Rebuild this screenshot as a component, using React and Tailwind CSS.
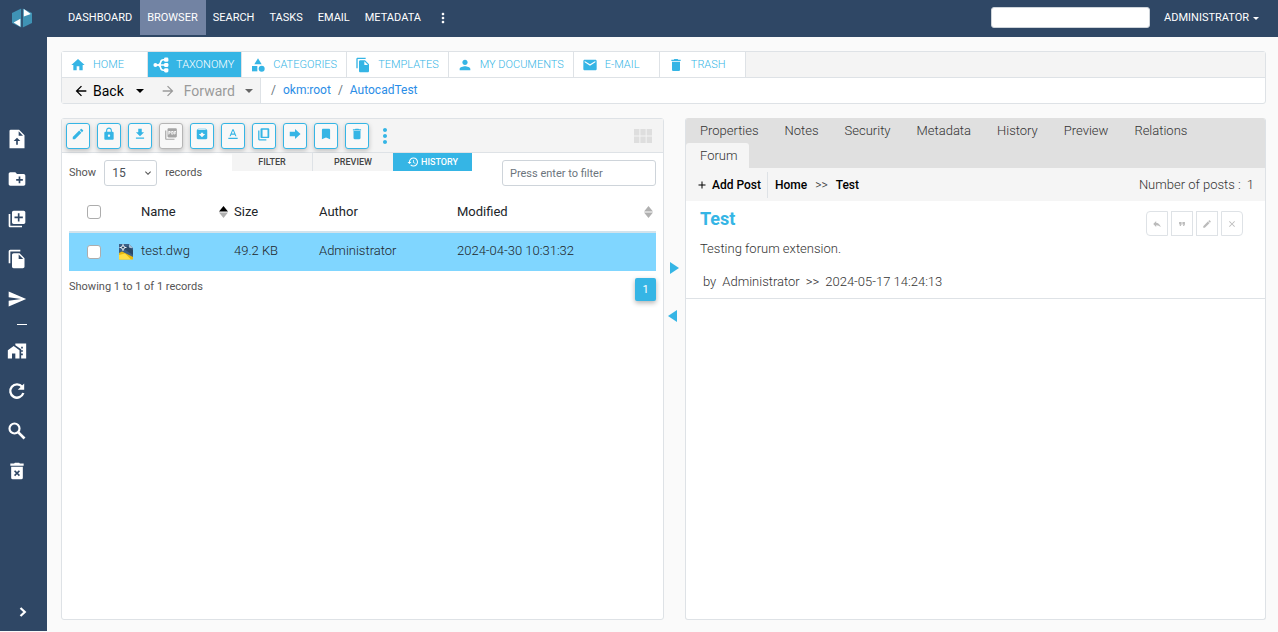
import React from "react";
import {
  MdHome, MdCategory, MdFileCopy, MdPerson, MdEmail, MdDelete, MdEdit, MdLock, MdFileDownload,
  MdPictureAsPdf, MdArchive, MdBookmark, MdHistory, MdViewModule, MdReply, MdFormatQuote, MdClose,
  MdAdd, MdArrowBack, MdArrowForward, MdMoreVert, MdSend, MdHomeWork,
  MdCreateNewFolder, MdLibraryAdd, MdExpandMore,
} from "react-icons/md";

function Logo() {
  return (
    <svg viewBox="0 0 20 20" className="size-5" aria-hidden="true">
      <path d="M9.2 0.4 L0 5 V15 L9.2 19.6 Z" fill="#3f93b5" />
      <path d="M10.8 0.4 L20 5 V15 L10.8 19.6 Z" fill="#3f93b5" />
      <path d="M11.8 1 L18.8 6 L11.8 8.6 Z" fill="#fff" />
      <path d="M8.4 10.8 V18.8 L1.6 14.4 Z" fill="#fff" />
    </svg>
  );
}

function TreeIcon({ className }) {
  return (
    <svg viewBox="0 0 16 16" className={className} fill="none" stroke="currentColor" strokeWidth="1.6" aria-hidden="true">
      <path d="M3 8H12M12 2.8H10.5Q8 2.8 7.6 5.4Q7.2 8 4 8Q7.2 8 7.6 10.6Q8 13.2 10.5 13.2H12" />
      <g fill="currentColor" stroke="none">
        <circle cx="2.4" cy="8" r="2" />
        <rect x="11" y="0.6" width="4.4" height="4.2" rx="1.4" />
        <rect x="11" y="5.9" width="4.4" height="4.2" rx="1.4" />
        <rect x="11" y="11.2" width="4.4" height="4.2" rx="1.4" />
      </g>
    </svg>
  );
}

function UploadIcon({ className }) {
  return (
    <svg viewBox="0 0 24 24" className={className} fill="currentColor" aria-hidden="true">
      <path fillRule="evenodd" d="M4.5 1H14.5L21 7.5V23H3V2.5A1.5 1.5 0 0 1 4.5 1ZM14 2.8V8H19.2ZM12 10.5L8 14.5H11V19H13V14.5H16Z" />
    </svg>
  );
}

function RefreshIcon({ className }) {
  return (
    <svg viewBox="0 0 24 24" className={className} fill="none" stroke="currentColor" strokeWidth="2.8" aria-hidden="true">
      <path d="M18.2 7A8 8 0 1 0 19.6 14.4" />
      <path d="M20.6 3V10.6H13Z" fill="currentColor" stroke="none" />
    </svg>
  );
}

function SearchIcon({ className }) {
  return (
    <svg viewBox="0 0 24 24" className={className} fill="none" stroke="currentColor" strokeWidth="2.6" aria-hidden="true">
      <circle cx="9" cy="9" r="6" />
      <path d="M13.6 13.6L21 21" strokeWidth="3.2" />
    </svg>
  );
}

function ChevronIcon({ className }) {
  return (
    <svg viewBox="0 0 10 10" className={className} fill="none" stroke="currentColor" strokeWidth="2.2" aria-hidden="true">
      <path d="M2.5 1L6.8 5L2.5 9" />
    </svg>
  );
}

function PurgeIcon({ className }) {
  return (
    <svg viewBox="0 0 24 24" className={className} fill="currentColor" aria-hidden="true">
      <path
        fillRule="evenodd"
        d="M5 7H19V20A2 2 0 0 1 17 22H7A2 2 0 0 1 5 20ZM9.8 11L8.4 12.4L10.6 14.6L8.4 16.8L9.8 18.2L12 16L14.2 18.2L15.6 16.8L13.4 14.6L15.6 12.4L14.2 11L12 13.2ZM4 3H8.5L9.5 2H14.5L15.5 3H20V5.6H4Z"
      />
    </svg>
  );
}

function RenameIcon({ className }) {
  return (
    <svg viewBox="0 0 24 24" className={className} fill="currentColor" aria-hidden="true">
      <path d="M4 18.5H20V20.5H4ZM11 4H13L18 16H16L14.9 13.2H9.1L8 16H6ZM9.9 11.2H14.1L12 5.9Z" />
    </svg>
  );
}

function CopyIcon({ className }) {
  return (
    <svg viewBox="0 0 24 24" className={className} fill="currentColor" aria-hidden="true">
      <path fillRule="evenodd" d="M8 2H19A2 2 0 0 1 21 4V17A2 2 0 0 1 19 19H8A2 2 0 0 1 6 17V4A2 2 0 0 1 8 2ZM9.5 4.5V16.5H18V4.5ZM2 6H4.2V20.8H16V23H4A2 2 0 0 1 2 21Z" />
    </svg>
  );
}

function MoveIcon({ className }) {
  return (
    <svg viewBox="0 0 24 24" className={className} fill="currentColor" aria-hidden="true">
      <path d="M3 8H12V3.5L21.5 12L12 20.5V16H3Z" />
    </svg>
  );
}

function DwgIcon() {
  return (
    <svg viewBox="0 0 16 16" className="size-4" aria-hidden="true">
      <path d="M1 0H11L15 4V15H1Z" fill="#3c5f86" />
      <path d="M11 0V4H15Z" fill="#a9bfd4" />
      <path d="M6 5L15 11V6L9 2Z" fill="#2b4765" />
      <path d="M1 9L4 7.4L15 13V15.6H1Z" fill="#e9b90f" />
      <path d="M1 11L7 9.4L13 15.6H1Z" fill="#ffdf45" />
      <path d="M5 0V7M1.5 3.5H8.5" stroke="#e8eef4" strokeWidth="1" />
      <circle cx="5" cy="3.5" r="1.6" fill="#2b4765" stroke="#fff" strokeWidth="0.9" />
    </svg>
  );
}

function Caret({ className }) {
  return (
    <svg viewBox="0 0 8 4" className={className} fill="currentColor" aria-hidden="true">
      <path d="M0 0H8L4 4Z" />
    </svg>
  );
}

function SortIcon({ up }) {
  return (
    <svg viewBox="0 0 8 12" className="h-3 w-[9px]" preserveAspectRatio="none" aria-hidden="true">
      <path d="M4 0L8 5.4H0Z" fill={up} />
      <path d="M0 6.6H8L4 12Z" fill="#b0b0b0" />
    </svg>
  );
}

const menu = ["DASHBOARD", "BROWSER", "SEARCH", "TASKS", "EMAIL", "METADATA"];

const sideTools = [
  ["Upload document", UploadIcon],
  ["New folder", MdCreateNewFolder],
  ["New from template", MdLibraryAdd],
  ["Copy", MdFileCopy],
  ["Send", MdSend],
];
const sideTools2 = [
  ["Set as home", MdHomeWork],
  ["Refresh", RefreshIcon],
  ["Find", SearchIcon],
  ["Purge", PurgeIcon],
];

const places = [
  ["HOME", MdHome],
  ["TAXONOMY", TreeIcon],
  ["CATEGORIES", MdCategory],
  ["TEMPLATES", MdFileCopy],
  ["MY DOCUMENTS", MdPerson],
  ["E-MAIL", MdEmail],
  ["TRASH", MdDelete],
];

const fileTools = [
  ["Edit", MdEdit],
  ["Lock", MdLock],
  ["Download", MdFileDownload],
  ["Download as PDF", MdPictureAsPdf],
  ["Archive", MdArchive],
  ["Rename", RenameIcon],
  ["Copy", CopyIcon],
  ["Move", MoveIcon],
  ["Bookmark", MdBookmark],
  ["Delete", MdDelete],
];

const detailTabs = ["Properties", "Notes", "Security", "Metadata", "History", "Preview", "Relations", "Forum"];

const postTools = [
  ["Reply", MdReply, "rounded-l"],
  ["Quote", MdFormatQuote, ""],
  ["Edit post", MdEdit, ""],
  ["Delete post", MdClose, "rounded-r"],
];

function Header() {
  return (
    <header className="flex h-[37px] shrink-0 items-start bg-[#2f4765] text-[11px] text-white">
      <a href="#home" aria-label="Start page" className="flex w-[47px] shrink-0 justify-center pt-2 pr-1">
        <Logo />
      </a>
      <nav className="flex pl-[14px]">
        {menu.map((m) => (
          <a
            key={m}
            href={"#" + m.toLowerCase()}
            className={"flex h-[35px] items-center pt-px pr-2 pl-[7px] " + (m === "BROWSER" ? "bg-[#7283a3]" : "")}
          >
            {m}
          </a>
        ))}
        <button aria-label="More" className="flex h-[35px] items-center px-[6px]">
          <MdMoreVert className="size-4" />
        </button>
      </nav>
      <div className="ml-auto flex h-[35px] items-center pr-[19px]">
        <input aria-label="Search" className="h-[21px] w-[159px] rounded-[3px] border border-[#ced4da] bg-white px-2 text-gray-700" />
        <button className="ml-[14px] flex items-center gap-1 pt-px">
          ADMINISTRATOR
          <Caret className="h-[3px] w-[6px]" />
        </button>
      </div>
    </header>
  );
}

function SideBar() {
  return (
    <aside className="flex w-[47px] shrink-0 flex-col bg-[#2f4765] pt-[92px] text-white">
      {sideTools.map(([label, Icon]) => (
        <button key={label} aria-label={label} className="flex h-10 items-start pl-[7px]">
          <Icon className="size-5" />
        </button>
      ))}
      <hr className="mt-[-5px] mb-4 ml-[17px] w-[10px] border-white" />
      {sideTools2.map(([label, Icon]) => (
        <button key={label} aria-label={label} className="flex h-10 items-start pl-[7px]">
          <Icon className="size-5" />
        </button>
      ))}
      <button aria-label="Expand" className="mt-auto mb-[14px] pl-[18px]">
        <ChevronIcon className="size-[10px]" />
      </button>
    </aside>
  );
}

function Places() {
  return (
    <section className="rounded-[3px] border border-[#dee2e6] bg-white">
      <nav className="flex border-b border-[#dee2e6] bg-[#f4f4f4]">
        {places.map(([label, Icon]) => (
          <a
            key={label}
            href={"#" + label.toLowerCase().replace(" ", "-")}
            className={
              "flex h-[25px] items-center border-r border-[#dee2e6] text-[11px] font-light " +
              (label === "TAXONOMY"
                ? "gap-[7px] bg-[#35b5e5] pr-[7px] pl-[5px] text-white"
                : "min-w-[86px] gap-[7px] bg-white pr-[9px] pl-2 text-[#35b5e5]")
            }
          >
            <Icon className="size-4" />
            <span className="pt-px">{label}</span>
          </a>
        ))}
      </nav>
      <div className="flex h-[25px] items-stretch">
        <div className="flex w-[199px] items-center border-r border-[#dee2e6] bg-[#f4f4f4] pt-px pl-[11px] text-[14px]">
          <button className="flex items-center gap-1 text-black">
            <MdArrowBack className="size-4" />
            Back
          </button>
          <button aria-label="Back list" className="ml-3 text-black">
            <Caret className="h-1 w-2" />
          </button>
          <button disabled className="ml-4 flex items-center gap-2 text-[#9a9a9a]">
            <MdArrowForward className="size-4" />
            Forward
          </button>
          <button aria-label="Forward list" className="ml-[10px] text-[#666]">
            <Caret className="h-1 w-2" />
          </button>
        </div>
        <nav aria-label="Breadcrumb" className="flex items-center gap-[7px] pb-px pl-[10px] text-[12px] text-[#2b8de6]">
          <span className="text-[#6c757d]">/</span>
          <a href="#root">okm:root</a>
          <span className="text-[#6c757d]">/</span>
          <a href="#autocad">AutocadTest</a>
        </nav>
      </div>
    </section>
  );
}

function Files() {
  return (
    <section className="min-w-0 flex-[603] rounded-[3px] border border-[#dee2e6] bg-white">
      <div className="flex h-[34px] items-center border-b border-[#dee2e6] bg-[#f4f4f4] pl-1">
        <div className="flex gap-[7px]">
          {fileTools.map(([label, Icon]) => (
            <button
              key={label}
              aria-label={label}
              disabled={label === "Download as PDF"}
              className={
                "flex h-[26px] w-6 items-center justify-center rounded-[3px] border bg-[#f8f8f8] pb-[3px] shadow-[0_2px_5px_rgba(0,0,0,0.22)] " +
                (label === "Download as PDF" ? "border-[#b5b5b5] text-[#a5a5a5]" : "border-[#35b5e5] text-[#35b5e5]")
              }
            >
              <Icon className="size-[14px]" />
            </button>
          ))}
        </div>
        <button aria-label="More actions" className="ml-1 text-[#35b5e5]">
          <MdMoreVert className="size-6" />
        </button>
        <button aria-label="Grid view" className="mr-2 ml-auto text-[#dedede]">
          <MdViewModule className="size-6" />
        </button>
      </div>

      <div className="px-[7px]">
        <div className="flex items-start justify-between">
          <label className="flex items-center gap-2 pt-[7px] text-[11px] text-[#555]">
            <span className="pt-px">Show</span>
            <span className="relative flex items-center">
              <select defaultValue="15" className="h-[26px] w-[53px] appearance-none rounded-[3px] border border-[#ced4da] bg-white pl-[7px] text-[12px] text-[#495057]">
                <option>15</option>
                <option>30</option>
                <option>50</option>
              </select>
              <MdExpandMore className="pointer-events-none absolute right-[3px] size-3" />
            </span>
            <span className="pt-px">records</span>
          </label>
          <div className="flex h-[18px] text-[9px] font-medium text-[#444]">
            <button className="w-[81px] border-r border-[#dee2e6] bg-[#f4f4f4] pt-[2px]">FILTER</button>
            <button className="w-20 bg-[#f4f4f4] pt-[2px]">PREVIEW</button>
            <button className="flex w-[79px] items-center justify-center gap-[2px] bg-[#35b5e5] text-white">
              <MdHistory className="size-3" />
              <span className="pt-[2px]">HISTORY</span>
            </button>
          </div>
          <input
            aria-label="Filter"
            placeholder="Press enter to filter"
            className="mt-[7px] h-[26px] w-[154px] rounded-[3px] border border-[#ced4da] px-[7px] text-[11px] placeholder:text-[#6c757d]"
          />
        </div>

        <table className="mt-[6px] w-full table-fixed text-left text-[13px]">
          <colgroup>
            <col className="w-[49px]" />
            <col className="w-[23px]" />
            <col className="w-[93px]" />
            <col className="w-[85px]" />
            <col className="w-[138px]" />
            <col />
          </colgroup>
          <thead>
            <tr className="h-10 border-b-2 border-[#d3e3ec] text-[#212529]">
              <th className="pl-[18px]">
                <input type="checkbox" aria-label="Select all" className="block size-[14px] appearance-none rounded-[3px] border border-[#adadad] bg-white" />
              </th>
              <th aria-label="Type" />
              <th className="pt-px font-normal">
                <div className="flex items-center justify-between pr-[6px]">
                  Name <SortIcon up="#000" />
                </div>
              </th>
              <th className="pt-px font-normal">Size</th>
              <th className="pt-px font-normal">Author</th>
              <th className="pt-px font-normal">
                <div className="flex items-center justify-between pr-[3px]">
                  Modified <SortIcon up="#b0b0b0" />
                </div>
              </th>
            </tr>
          </thead>
          <tbody>
            <tr className="h-[39px] bg-[#80d6ff] font-light text-[#212529]">
              <td className="pl-[18px]">
                <input type="checkbox" aria-label="Select test.dwg" className="block size-[14px] appearance-none rounded-[3px] border border-[#adadad] bg-white" />
              </td>
              <td>
                <DwgIcon />
              </td>
              <td className="pb-[2px]">test.dwg</td>
              <td className="pb-[2px]">49.2 KB</td>
              <td className="pb-[2px]">Administrator</td>
              <td className="pb-[2px]">2024-04-30 10:31:32</td>
            </tr>
          </tbody>
        </table>

        <div className="mt-[7px] flex items-start justify-between">
          <p className="pt-px text-[11px] text-[#555]">Showing 1 to 1 of 1 records</p>
          <button className="h-[23px] w-[21px] rounded-[2px] bg-[#35b5e5] pt-px text-[11px] text-white shadow-[0_2px_5px_rgba(0,0,0,0.3)]">1</button>
        </div>
      </div>
    </section>
  );
}

function Splitter() {
  return (
    <div className="flex w-[21px] shrink-0 flex-col items-start gap-9 pt-[144px] text-[#35b5e5]">
      <button aria-label="Widen list" className="pl-[6px]">
        <svg viewBox="0 0 9 12" className="h-3 w-[9px]" fill="currentColor" aria-hidden="true">
          <path d="M0 0L9 6L0 12Z" />
        </svg>
      </button>
      <button aria-label="Widen details" className="pl-1">
        <svg viewBox="0 0 9 12" className="h-3 w-[9px]" fill="currentColor" aria-hidden="true">
          <path d="M9 0V12L0 6Z" />
        </svg>
      </button>
    </div>
  );
}

function Details() {
  return (
    <section className="min-w-0 flex-[581] overflow-hidden rounded-[3px] border border-t-0 border-[#dee2e6] bg-white text-[13px] font-light text-[#333]">
      <nav className="flex flex-wrap bg-[#e0e0e0] pr-3">
        {detailTabs.map((t) => (
          <a
            key={t}
            href={"#" + t.toLowerCase()}
            className={"flex h-[25px] items-center pt-px pr-3 pl-[14px] " + (t === "Forum" ? "rounded-t-[3px] bg-[#f5f5f5]" : "")}
          >
            {t}
          </a>
        ))}
      </nav>
      <div className="flex h-[33px] items-center bg-[#f5f5f5] pr-[11px] pl-[10px]">
        <button className="flex items-center gap-1 text-[12px] font-medium text-black">
          <MdAdd className="size-3" />
          Add Post
        </button>
        <nav aria-label="Forum path" className="ml-[6px] flex h-[26px] items-center gap-2 border-l border-[#dee2e6] pl-[7px] text-[12px]">
          <a href="#forum-home" className="font-medium text-black">Home</a>
          <span>&gt;&gt;</span>
          <a href="#forum-test" className="font-medium text-black">Test</a>
        </nav>
        <p className="ml-auto flex gap-[6px]">
          <span>Number of posts :</span>
          <span>1</span>
        </p>
      </div>
      <article className="border-b border-[#dee2e6] pr-[22px] pb-[6px] pl-[14px]">
        <div className="flex items-start justify-between">
          <h2 className="pt-1 text-[18px] leading-7 font-bold text-[#35b5e5]">Test</h2>
          <div className="flex gap-[3px] pt-[10px]">
            {postTools.map(([label, Icon, corner]) => (
              <button key={label} aria-label={label} className={"flex h-[25px] w-[22px] items-center justify-center border border-[#dee2e6] text-[#bbb] " + corner}>
                <Icon className="size-[10px]" />
              </button>
            ))}
          </div>
        </div>
        <p className="mt-[3px] leading-5">Testing forum extension.</p>
        <p className="mt-[13px] flex gap-[6px] pl-[3px] leading-5">
          <span>by</span>
          <span>Administrator</span>
          <span>&gt;&gt;</span>
          <span>2024-05-17 14:24:13</span>
        </p>
      </article>
    </section>
  );
}

export default function App() {
  return (
    <div className="flex min-h-screen flex-col bg-[#fafafa] pb-px font-['Roboto',sans-serif]">
      <Header />
      <div className="flex flex-1">
        <SideBar />
        <main className="flex min-w-0 flex-1 flex-col gap-[14px] pt-[14px] pr-3 pb-[11px] pl-[14px]">
          <Places />
          <div className="flex flex-1">
            <Files />
            <Splitter />
            <Details />
          </div>
        </main>
      </div>
    </div>
  );
}
